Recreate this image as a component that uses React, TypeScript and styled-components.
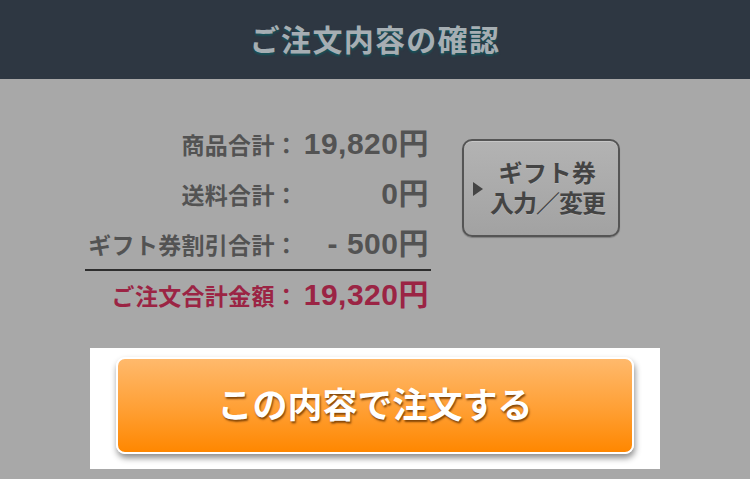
import styled, { createGlobalStyle } from 'styled-components';

const GlobalStyle = createGlobalStyle`
  html, body {
    margin: 0;
    padding: 0;
    background: #a8a8a8;
  }
  body {
    font-family: "Liberation Sans", "Noto Sans CJK JP", sans-serif;
  }
`;

const jp = `"Noto Sans CJK JP", "Liberation Sans", sans-serif`;

type Row = { label: string; value: string };

const rows: Row[] = [
  { label: '商品合計：', value: '19,820円' },
  { label: '送料合計：', value: '0円' },
  { label: 'ギフト券割引合計：', value: '- 500円' },
];

const Page = styled.div`
  width: 750px;
  height: 479px;
  background: #a8a8a8;
  overflow: hidden;
`;

const Header = styled.header`
  height: 79px;
  background: #2e3742;
  display: flex;
  align-items: center;
  justify-content: center;
`;

const Title = styled.h1`
  margin: 0 0 4px;
  font-family: ${jp};
  font-size: 30px;
  font-weight: 700;
  letter-spacing: 1.3px;
  color: #a6aeb3;
  text-shadow: 0 2px 2px #17535a;
`;

const Summary = styled.section`
  display: flex;
  align-items: flex-start;
  padding: 40px 0 0 85px;
`;

const Table = styled.div`
  display: grid;
  grid-template-columns: 213px 133px;
`;

const Label = styled.div<{ $total?: boolean }>`
  height: ${p => (p.$total ? 48 : 50)}px;
  line-height: ${p => (p.$total ? 48 : 50)}px;
  text-align: right;
  font-family: ${jp};
  font-size: 23px;
  font-weight: 700;
  letter-spacing: 0.3px;
  white-space: nowrap;
  color: ${p => (p.$total ? '#9b2444' : '#535353')};
`;

const Value = styled.div<{ $total?: boolean }>`
  height: ${p => (p.$total ? 48 : 50)}px;
  line-height: ${p => (p.$total ? 48 : 50)}px;
  text-align: right;
  font-size: 30px;
  font-weight: 700;
  letter-spacing: 0.5px;
  white-space: nowrap;
  color: ${p => (p.$total ? '#9b2444' : '#535353')};
  padding-right: 2px;
`;

const Divider = styled.div`
  grid-column: 1 / -1;
  height: 2px;
  background: #2e2e2e;
`;

const GiftButton = styled.button`
  margin: 20px 0 0 31px;
  width: 158px;
  height: 98px;
  box-sizing: border-box;
  border: 2px solid #555;
  border-radius: 10px;
  background: linear-gradient(#b3b3b3, #a9a9a9 60%, #a2a2a2);
  box-shadow: inset 0 1px 0 #c6c6c6, 0 1px 1px rgba(0, 0, 0, 0.25);
  display: flex;
  align-items: center;
  justify-content: center;
  gap: 7px;
  padding: 0 4px 0 0;
  cursor: pointer;
`;

const Arrow = styled.span`
  width: 0;
  height: 0;
  border-top: 7px solid transparent;
  border-bottom: 7px solid transparent;
  border-left: 10px solid #444;
  margin-top: 2px;
`;

const GiftText = styled.span`
  display: flex;
  flex-direction: column;
  align-items: center;
  padding-bottom: 2px;
`;

const GiftLine = styled.span<{ $tight?: boolean }>`
  display: block;
  font-family: ${jp};
  font-size: 24px;
  font-weight: 700;
  line-height: 30px;
  letter-spacing: ${p => (p.$tight ? '-1px' : '0.5px')};
  color: #444;
  white-space: nowrap;
  text-shadow: 0 1px 0 rgba(255, 255, 255, 0.15);
`;

const ActionPanel = styled.div`
  margin: 29px 0 0 90px;
  width: 570px;
  box-sizing: border-box;
  background: #fff;
  padding: 9px 26px 15px 26px;
`;

const OrderButton = styled.button`
  width: 518px;
  height: 97px;
  box-sizing: border-box;
  border: 2px solid #fff;
  border-radius: 9px;
  background: linear-gradient(#ffb96c, #ff9f33 55%, #ff8700);
  box-shadow: 1px 4px 6px rgba(0, 0, 0, 0.45);
  display: flex;
  align-items: center;
  justify-content: center;
  padding: 0 0 6px;
  cursor: pointer;
  font-family: ${jp};
  font-size: 35px;
  font-weight: 700;
  color: #fff;
  text-shadow: 1px 2px 2px rgba(110, 55, 0, 0.85);
`;

export default function App() {
  return (
    <Page>
      <GlobalStyle />
      <Header>
        <Title>ご注文内容の確認</Title>
      </Header>
      <Summary>
        <Table>
          {rows.map(r => (
            <>
              <Label key={r.label + 'l'}>{r.label}</Label>
              <Value key={r.label + 'v'}>{r.value}</Value>
            </>
          ))}
          <Divider />
          <Label $total>ご注文合計金額：</Label>
          <Value $total>19,320円</Value>
        </Table>
        <GiftButton>
          <Arrow />
          <GiftText>
            <GiftLine>ギフト券</GiftLine>
            <GiftLine $tight>入力／変更</GiftLine>
          </GiftText>
        </GiftButton>
      </Summary>
      <ActionPanel>
        <OrderButton>この内容で注文する</OrderButton>
      </ActionPanel>
    </Page>
  );
}
